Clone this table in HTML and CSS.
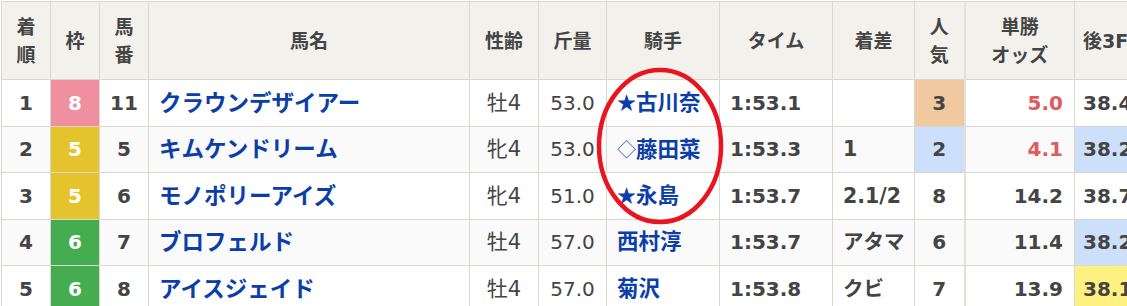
FILE: index.html
```html
<!DOCTYPE html>
<html lang="ja">
<head>
<meta charset="utf-8">
<title>レース結果</title>
<link rel="stylesheet" href="styles.css">
</head>
<body>
<div class="wrap">
<table class="result">
  <colgroup>
    <col class="c-rank"><col class="c-waku"><col class="c-umaban"><col class="c-name"><col class="c-sex"><col class="c-kin"><col class="c-jockey"><col class="c-time"><col class="c-diff"><col class="c-pop"><col class="c-odds"><col class="c-last">
  </colgroup>
  <thead>
    <tr>
      <th>着<br>順</th>
      <th>枠</th>
      <th>馬<br>番</th>
      <th>馬名</th>
      <th>性齢</th>
      <th>斤量</th>
      <th>騎手</th>
      <th>タイム</th>
      <th>着差</th>
      <th class="pop">人<br>気</th>
      <th>単勝<br>オッズ</th>
      <th class="last">後3F</th>
    </tr>
  </thead>
  <tbody>
    <tr>
      <td class="num">1</td>
      <td class="waku w8">8</td>
      <td class="num">11</td>
      <td class="name">クラウンデザイアー</td>
      <td class="sex">牡4</td>
      <td class="kin">53.0</td>
      <td class="jockey"><span class="mark">★</span>古川奈</td>
      <td class="time">1:53.1</td>
      <td class="diff"></td>
      <td class="pop p3">3</td>
      <td class="odds red">5.0</td>
      <td class="last">38.4</td>
    </tr>
    <tr class="alt">
      <td class="num">2</td>
      <td class="waku w5">5</td>
      <td class="num">5</td>
      <td class="name">キムケンドリーム</td>
      <td class="sex">牝4</td>
      <td class="kin">53.0</td>
      <td class="jockey"><span class="mark dia">◇</span>藤田菜</td>
      <td class="time">1:53.3</td>
      <td class="diff">1</td>
      <td class="pop p2">2</td>
      <td class="odds red">4.1</td>
      <td class="last l2">38.2</td>
    </tr>
    <tr>
      <td class="num">3</td>
      <td class="waku w5">5</td>
      <td class="num">6</td>
      <td class="name">モノポリーアイズ</td>
      <td class="sex">牝4</td>
      <td class="kin">51.0</td>
      <td class="jockey"><span class="mark">★</span>永島</td>
      <td class="time">1:53.7</td>
      <td class="diff">2.1/2</td>
      <td class="pop">8</td>
      <td class="odds">14.2</td>
      <td class="last">38.7</td>
    </tr>
    <tr class="alt">
      <td class="num">4</td>
      <td class="waku w6">6</td>
      <td class="num">7</td>
      <td class="name">ブロフェルド</td>
      <td class="sex">牡4</td>
      <td class="kin">57.0</td>
      <td class="jockey">西村淳</td>
      <td class="time">1:53.7</td>
      <td class="diff">アタマ</td>
      <td class="pop">6</td>
      <td class="odds">11.4</td>
      <td class="last l2">38.2</td>
    </tr>
    <tr>
      <td class="num">5</td>
      <td class="waku w6">6</td>
      <td class="num">8</td>
      <td class="name">アイスジェイド</td>
      <td class="sex">牡4</td>
      <td class="kin">57.0</td>
      <td class="jockey">菊沢</td>
      <td class="time">1:53.8</td>
      <td class="diff">クビ</td>
      <td class="pop">7</td>
      <td class="odds">13.9</td>
      <td class="last l1">38.1</td>
    </tr>
  </tbody>
</table>
<svg class="circle" width="132" height="162" viewBox="0 0 132 162" aria-hidden="true">
  <ellipse cx="66" cy="81" rx="61" ry="76" fill="none" stroke="#e8141e" stroke-width="4.5"/>
</svg>
</div>
</body>
</html>
```

FILE: styles.css
```css
html, body {
  margin: 0;
  padding: 0;
  background: #fff;
  overflow: hidden;
}
.wrap {
  position: relative;
  padding: 1px 0 0 1px;
  width: 1300px;
}
.result {
  border-collapse: collapse;
  table-layout: fixed;
  width: 1220px;
  font-family: "DejaVu Sans", "Noto Sans CJK JP", sans-serif;
  color: #444;
}
.c-rank { width: 49px; }
.c-waku { width: 49px; }
.c-umaban { width: 49px; }
.c-name { width: 321px; }
.c-sex { width: 69px; }
.c-kin { width: 68px; }
.c-jockey { width: 113px; }
.c-time { width: 113px; }
.c-diff { width: 82px; }
.c-pop { width: 50px; }
.c-odds { width: 110px; }
.c-last { width: 149px; }

.result th, .result td {
  border: 1px solid #d9d7ce;
  padding: 0;
}
.result th {
  background: #f2f1ec;
  height: 77px;
  font-size: 19px;
  line-height: 28px;
  font-weight: bold;
  color: #444;
  text-align: center;
}
.result th.pop { border-right: 2px solid #e2e0d8; }
.result th.last { text-align: left; padding-left: 8px; }
.result td {
  height: 45.5px;
  font-size: 20px;
  line-height: 24px;
  font-weight: bold;
  text-align: center;
}
.result tr.alt td { background: #fafafa; }
.result td.waku { color: #fff; }
.result tr td.w8 { background: #f08f9f; }
.result tr td.w5 { background: #e5c32c; }
.result tr td.w6 { background: #45ad4f; }
.result td.name {
  text-align: left;
  padding-left: 10px;
  color: #0b3ea8;
  font-size: 22.5px;
}
.result td.sex, .result td.kin {
  font-weight: normal;
}
.result td.sex { font-size: 21px; }
.result td.jockey {
  text-align: left;
  padding-left: 10px;
  color: #0b3ea8;
  font-size: 21.5px;
}
.mark { font-family: "Noto Sans CJK JP", sans-serif; font-size: 19px; }
.mark.dia { font-weight: normal; color: #3b68c8; }
.result td.time, .result td.diff {
  text-align: left;
  padding-left: 10px;
}
.result td.diff { font-size: 20.5px; }
.result td.pop { border-right: 2px solid #e2e0d8; }
.result tr td.p3 { background: #f0c9a0; }
.result tr td.p2 { background: #cce0fb; }
.result td.odds {
  text-align: right;
  padding-right: 11px;
}
.result td.red { color: #e05a5e; }
.result td.last { text-align: left; padding-left: 8px; }
.result tr td.l2 { background: #cce0fb; }
.result tr td.l1 { background: #fff082; }

.circle {
  position: absolute;
  left: 594px;
  top: 65px;
}
```
